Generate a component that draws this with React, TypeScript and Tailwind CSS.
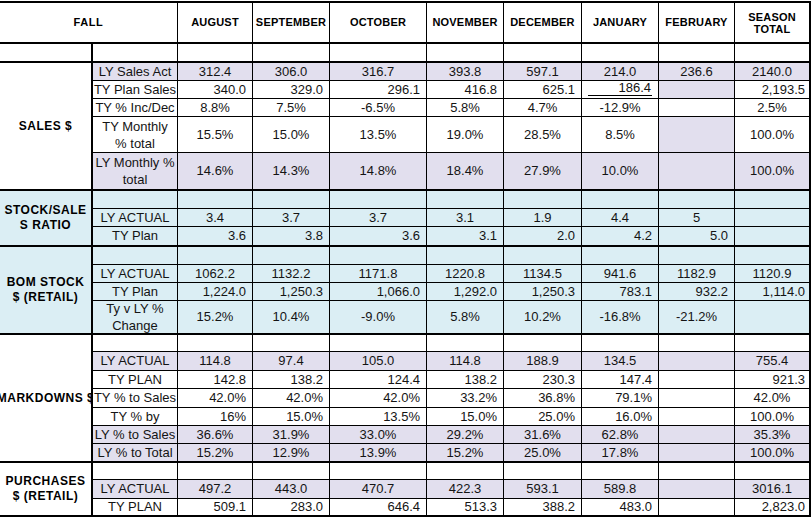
import React from "react";

type Bg = "lav" | "w" | "blue";
type Align = "c" | "r";

interface RowDef {
  label: React.ReactNode;
  bg: Bg;
  a: Align;
  vals: string[];
  febBg?: Bg;
  lastAlign?: Align;
  underline?: number;
}

interface SectionDef {
  title: React.ReactNode;
  bg: Bg;
  rows: RowDef[];
}

const bgClass = (b: Bg) =>
  b === "lav" ? "bg-[#e2dfee]" : b === "blue" ? "bg-[#dbeef4]" : "bg-white";

const two = (a: string, b: string) => (
  <div className="text-center leading-[17px] whitespace-nowrap">
    {a}
    <br />
    {b}
  </div>
);

const E8 = ["", "", "", "", "", "", "", ""];

const sections: SectionDef[] = [
  {
    title: "SALES $",
    bg: "w",
    rows: [
      { label: "LY Sales Act", bg: "lav", a: "c", vals: ["312.4", "306.0", "316.7", "393.8", "597.1", "214.0", "236.6", "2140.0"] },
      { label: "TY Plan Sales", bg: "w", a: "r", febBg: "lav", underline: 5, vals: ["340.0", "329.0", "296.1", "416.8", "625.1", "186.4", "", "2,193.5"] },
      { label: "TY % Inc/Dec", bg: "w", a: "c", vals: ["8.8%", "7.5%", "-6.5%", "5.8%", "4.7%", "-12.9%", "", "2.5%"] },
      { label: two("TY Monthly", "% total"), bg: "w", a: "c", febBg: "lav", vals: ["15.5%", "15.0%", "13.5%", "19.0%", "28.5%", "8.5%", "", "100.0%"] },
      { label: two("LY Monthly %", "total"), bg: "lav", a: "c", vals: ["14.6%", "14.3%", "14.8%", "18.4%", "27.9%", "10.0%", "", "100.0%"] },
    ],
  },
  {
    title: (
      <>
        STOCK/SALE
        <br />S RATIO
      </>
    ),
    bg: "blue",
    rows: [
      { label: "", bg: "blue", a: "c", vals: E8 },
      { label: "LY ACTUAL", bg: "blue", a: "c", vals: ["3.4", "3.7", "3.7", "3.1", "1.9", "4.4", "5", ""] },
      { label: "TY Plan", bg: "blue", a: "r", vals: ["3.6", "3.8", "3.6", "3.1", "2.0", "4.2", "5.0", ""] },
    ],
  },
  {
    title: (
      <>
        BOM STOCK
        <br />$ (RETAIL)
      </>
    ),
    bg: "blue",
    rows: [
      { label: "", bg: "blue", a: "c", vals: E8 },
      { label: "LY ACTUAL", bg: "blue", a: "c", vals: ["1062.2", "1132.2", "1171.8", "1220.8", "1134.5", "941.6", "1182.9", "1120.9"] },
      { label: "TY Plan", bg: "blue", a: "r", vals: ["1,224.0", "1,250.3", "1,066.0", "1,292.0", "1,250.3", "783.1", "932.2", "1,114.0"] },
      { label: two("Ty v LY %", "Change"), bg: "blue", a: "c", vals: ["15.2%", "10.4%", "-9.0%", "5.8%", "10.2%", "-16.8%", "-21.2%", ""] },
    ],
  },
  {
    title: "MARKDOWNS $",
    bg: "w",
    rows: [
      { label: "", bg: "w", a: "c", vals: E8 },
      { label: "LY ACTUAL", bg: "lav", a: "c", vals: ["114.8", "97.4", "105.0", "114.8", "188.9", "134.5", "", "755.4"] },
      { label: "TY PLAN", bg: "w", a: "r", vals: ["142.8", "138.2", "124.4", "138.2", "230.3", "147.4", "", "921.3"] },
      { label: "TY % to Sales", bg: "w", a: "r", lastAlign: "c", vals: ["42.0%", "42.0%", "42.0%", "33.2%", "36.8%", "79.1%", "", "42.0%"] },
      { label: "TY % by", bg: "w", a: "r", lastAlign: "c", vals: ["16%", "15.0%", "13.5%", "15.0%", "25.0%", "16.0%", "", "100.0%"] },
      { label: "LY % to Sales", bg: "lav", a: "c", vals: ["36.6%", "31.9%", "33.0%", "29.2%", "31.6%", "62.8%", "", "35.3%"] },
      { label: "LY % to Total", bg: "lav", a: "c", vals: ["15.2%", "12.9%", "13.9%", "15.2%", "25.0%", "17.8%", "", "100.0%"] },
    ],
  },
  {
    title: (
      <>
        PURCHASES
        <br />$ (RETAIL)
      </>
    ),
    bg: "w",
    rows: [
      { label: "", bg: "w", a: "c", vals: E8 },
      { label: "LY ACTUAL", bg: "lav", a: "c", vals: ["497.2", "443.0", "470.7", "422.3", "593.1", "589.8", "", "3016.1"] },
      { label: "TY PLAN", bg: "w", a: "r", vals: ["509.1", "283.0", "646.4", "513.3", "388.2", "483.0", "", "2,823.0"] },
    ],
  },
];

const months = ["AUGUST", "SEPTEMBER", "OCTOBER", "NOVEMBER", "DECEMBER", "JANUARY", "FEBRUARY"];

const dataFont = { fontFamily: '"Liberation Sans", Arial, sans-serif' };

function Cell({
  children,
  bg,
  align,
  thickB,
  col,
  span,
}: {
  children?: React.ReactNode;
  bg: Bg;
  align: Align;
  thickB: boolean;
  col: number;
  span?: number;
}) {
  const right = col === 0 || col === 9 ? "border-r-2" : "border-r";
  const bottom = thickB ? "border-b-2" : "border-b";
  const al = align === "r" ? (col === 9 ? "justify-end pr-[4px]" : "justify-end pr-[6px]") : "justify-center";
  return (
    <div
      className={`${right} ${bottom} border-black ${bgClass(bg)} flex items-center ${al} overflow-hidden whitespace-nowrap ${
        span === 2 ? "col-span-2" : ""
      }`}
    >
      {children}
    </div>
  );
}

export default function App() {
  const cells: React.ReactNode[] = [];

  // Header row
  cells.push(
    <div
      key="h-fall"
      className="col-span-2 border-r border-b-2 border-black bg-white flex items-center justify-center text-[11px] font-bold tracking-[0.6px] text-black"
    >
      FALL
    </div>
  );
  months.forEach((m, i) => {
    cells.push(
      <div
        key={"h-" + m}
        className="border-r border-b-2 border-black bg-white flex items-center justify-center text-[11px] font-bold tracking-[0.2px] text-black"
      >
        {m}
      </div>
    );
    void i;
  });
  cells.push(
    <div
      key="h-season"
      className="border-r-2 border-b-2 border-black bg-white flex items-center justify-center text-center text-[11px] font-bold leading-[12px] tracking-[0.2px] text-black"
    >
      SEASON
      <br />
      TOTAL
    </div>
  );

  // Empty row under header
  for (let c = 0; c < 10; c++) {
    cells.push(<Cell key={"e-" + c} bg="w" align="c" thickB={true} col={c} />);
  }

  sections.forEach((s, si) => {
    s.rows.forEach((r, ri) => {
      const last = ri === s.rows.length - 1;
      if (ri === 0) {
        const span =
          s.rows.length === 5
            ? "row-span-5"
            : s.rows.length === 3
            ? "row-span-3"
            : s.rows.length === 4
            ? "row-span-4"
            : "row-span-7";
        cells.push(
          <div
            key={`s-${si}`}
            className={`${span} border-r-2 border-b-2 border-black ${bgClass(
              s.bg
            )} flex items-center justify-center overflow-hidden whitespace-nowrap text-center text-[12px] font-bold leading-[15px] tracking-[0.5px] text-black`}
          >
            <div>{s.title}</div>
          </div>
        );
      }
      cells.push(
        <Cell key={`l-${si}-${ri}`} bg={r.bg} align="c" thickB={last} col={1}>
          <span className="text-[13px] text-[#141414]">{r.label}</span>
        </Cell>
      );
      r.vals.forEach((v, vi) => {
        const col = vi + 2;
        const bg: Bg = vi === 6 && r.febBg ? r.febBg : r.bg;
        const align: Align = vi === 7 && r.lastAlign ? r.lastAlign : r.a;
        if (r.underline === vi) {
          cells.push(
            <div
              key={`v-${si}-${ri}-${vi}`}
              className={`border-r ${last ? "border-b-2" : "border-b"} border-black ${bgClass(bg)} flex items-end pb-[2px] px-[6px]`}
            >
              <div className="w-full border-b border-black text-right text-[13px] leading-[14px] text-[#141414] pr-[1px]">
                {v}
              </div>
            </div>
          );
          return;
        }
        cells.push(
          <Cell key={`v-${si}-${ri}-${vi}`} bg={bg} align={align} thickB={last} col={col}>
            <span className="text-[13px] text-[#141414]">{v}</span>
          </Cell>
        );
      });
    });
  });

  return (
    <div className="w-[811px] h-[517px] bg-white pt-[1px] overflow-hidden" style={dataFont}>
      <div className="grid w-[811px] border-t-2 border-black grid-cols-[93px_85px_75px_77px_97px_77px_78px_77px_76px_76px] grid-rows-[41px_19px_18px_18px_18px_36px_38px_18px_18px_20px_18px_18px_18px_34px_17px_19px_18px_19px_18px_18px_19px_17px_19px_18px]">
        {cells}
      </div>
    </div>
  );
}
